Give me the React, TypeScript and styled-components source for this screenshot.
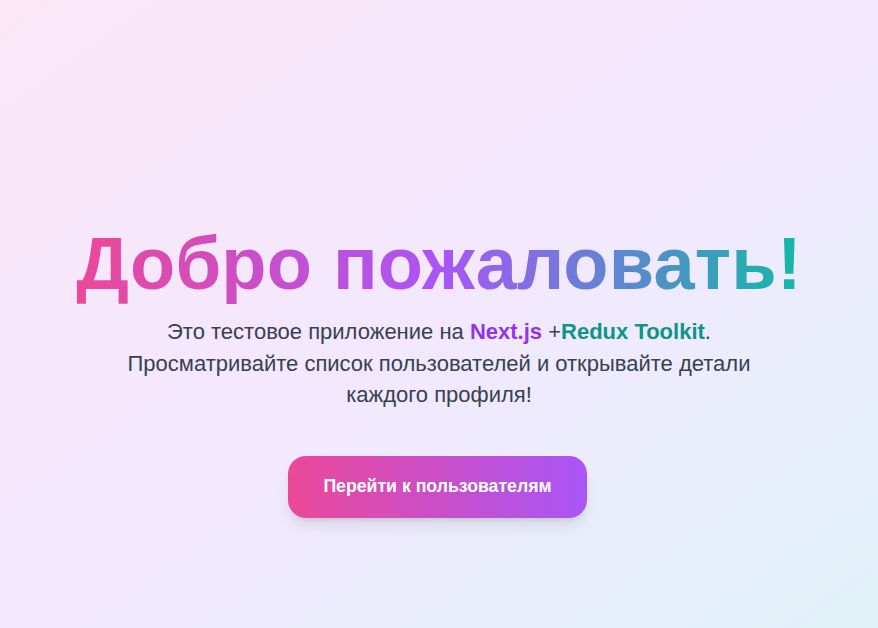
import React from "react";
import styled, { createGlobalStyle } from "styled-components";

const Global = createGlobalStyle`
  html, body { margin: 0; padding: 0; }
  body {
    font-family: "Liberation Sans", Arial, sans-serif;
    background: linear-gradient(to bottom right, #fbe7f6 0%, #f3e8ff 50%, #e0f2f8 100%);
    min-height: 100vh;
  }
`;

const Page = styled.main`
  min-height: 100vh;
  box-sizing: border-box;
  display: flex;
  flex-direction: column;
  align-items: center;
  padding-top: 221px;
  text-align: center;
`;

const Title = styled.h1`
  margin: 0;
  font-family: "Liberation Sans", Arial, sans-serif;
  font-size: 74px;
  font-weight: 800;
  line-height: 85px;
  letter-spacing: 0.2px;
  background: linear-gradient(to right, #ec4899, #a855f7, #14b8a6);
  -webkit-background-clip: text;
  background-clip: text;
  color: transparent;
`;

const Lead = styled.p`
  margin: 10px 0 0;
  max-width: 672px;
  font-size: 22px;
  line-height: 31.5px;
  color: #374151;
`;

const Accent = styled.span<{ $tone: "purple" | "teal" }>`
  font-weight: 700;
  color: ${(p) => (p.$tone === "purple" ? "#9333ea" : "#0d9488")};
`;

const CTA = styled.button`
  margin-top: 45px;
  margin-right: 3px;
  width: 299px;
  height: 62px;
  border: none;
  border-radius: 18px;
  background: linear-gradient(to right, #ec4899, #a855f7);
  color: #fff;
  font-family: "Liberation Sans", Arial, sans-serif;
  font-size: 17.7px;
  font-weight: 700;
  cursor: pointer;
  box-shadow: 0 10px 15px -3px rgba(0, 0, 0, 0.1), 0 4px 6px -4px rgba(0, 0, 0, 0.1);
`;

export default function App() {
  return (
    <>
      <Global />
      <Page>
        <Title>Добро пожаловать!</Title>
        <Lead>
          Это тестовое приложение на <Accent $tone="purple">Next.js</Accent> +
          <Accent $tone="teal">Redux Toolkit</Accent>. Просматривайте список
          пользователей и открывайте детали каждого профиля!
        </Lead>
        <CTA>Перейти к пользователям</CTA>
      </Page>
    </>
  );
}
